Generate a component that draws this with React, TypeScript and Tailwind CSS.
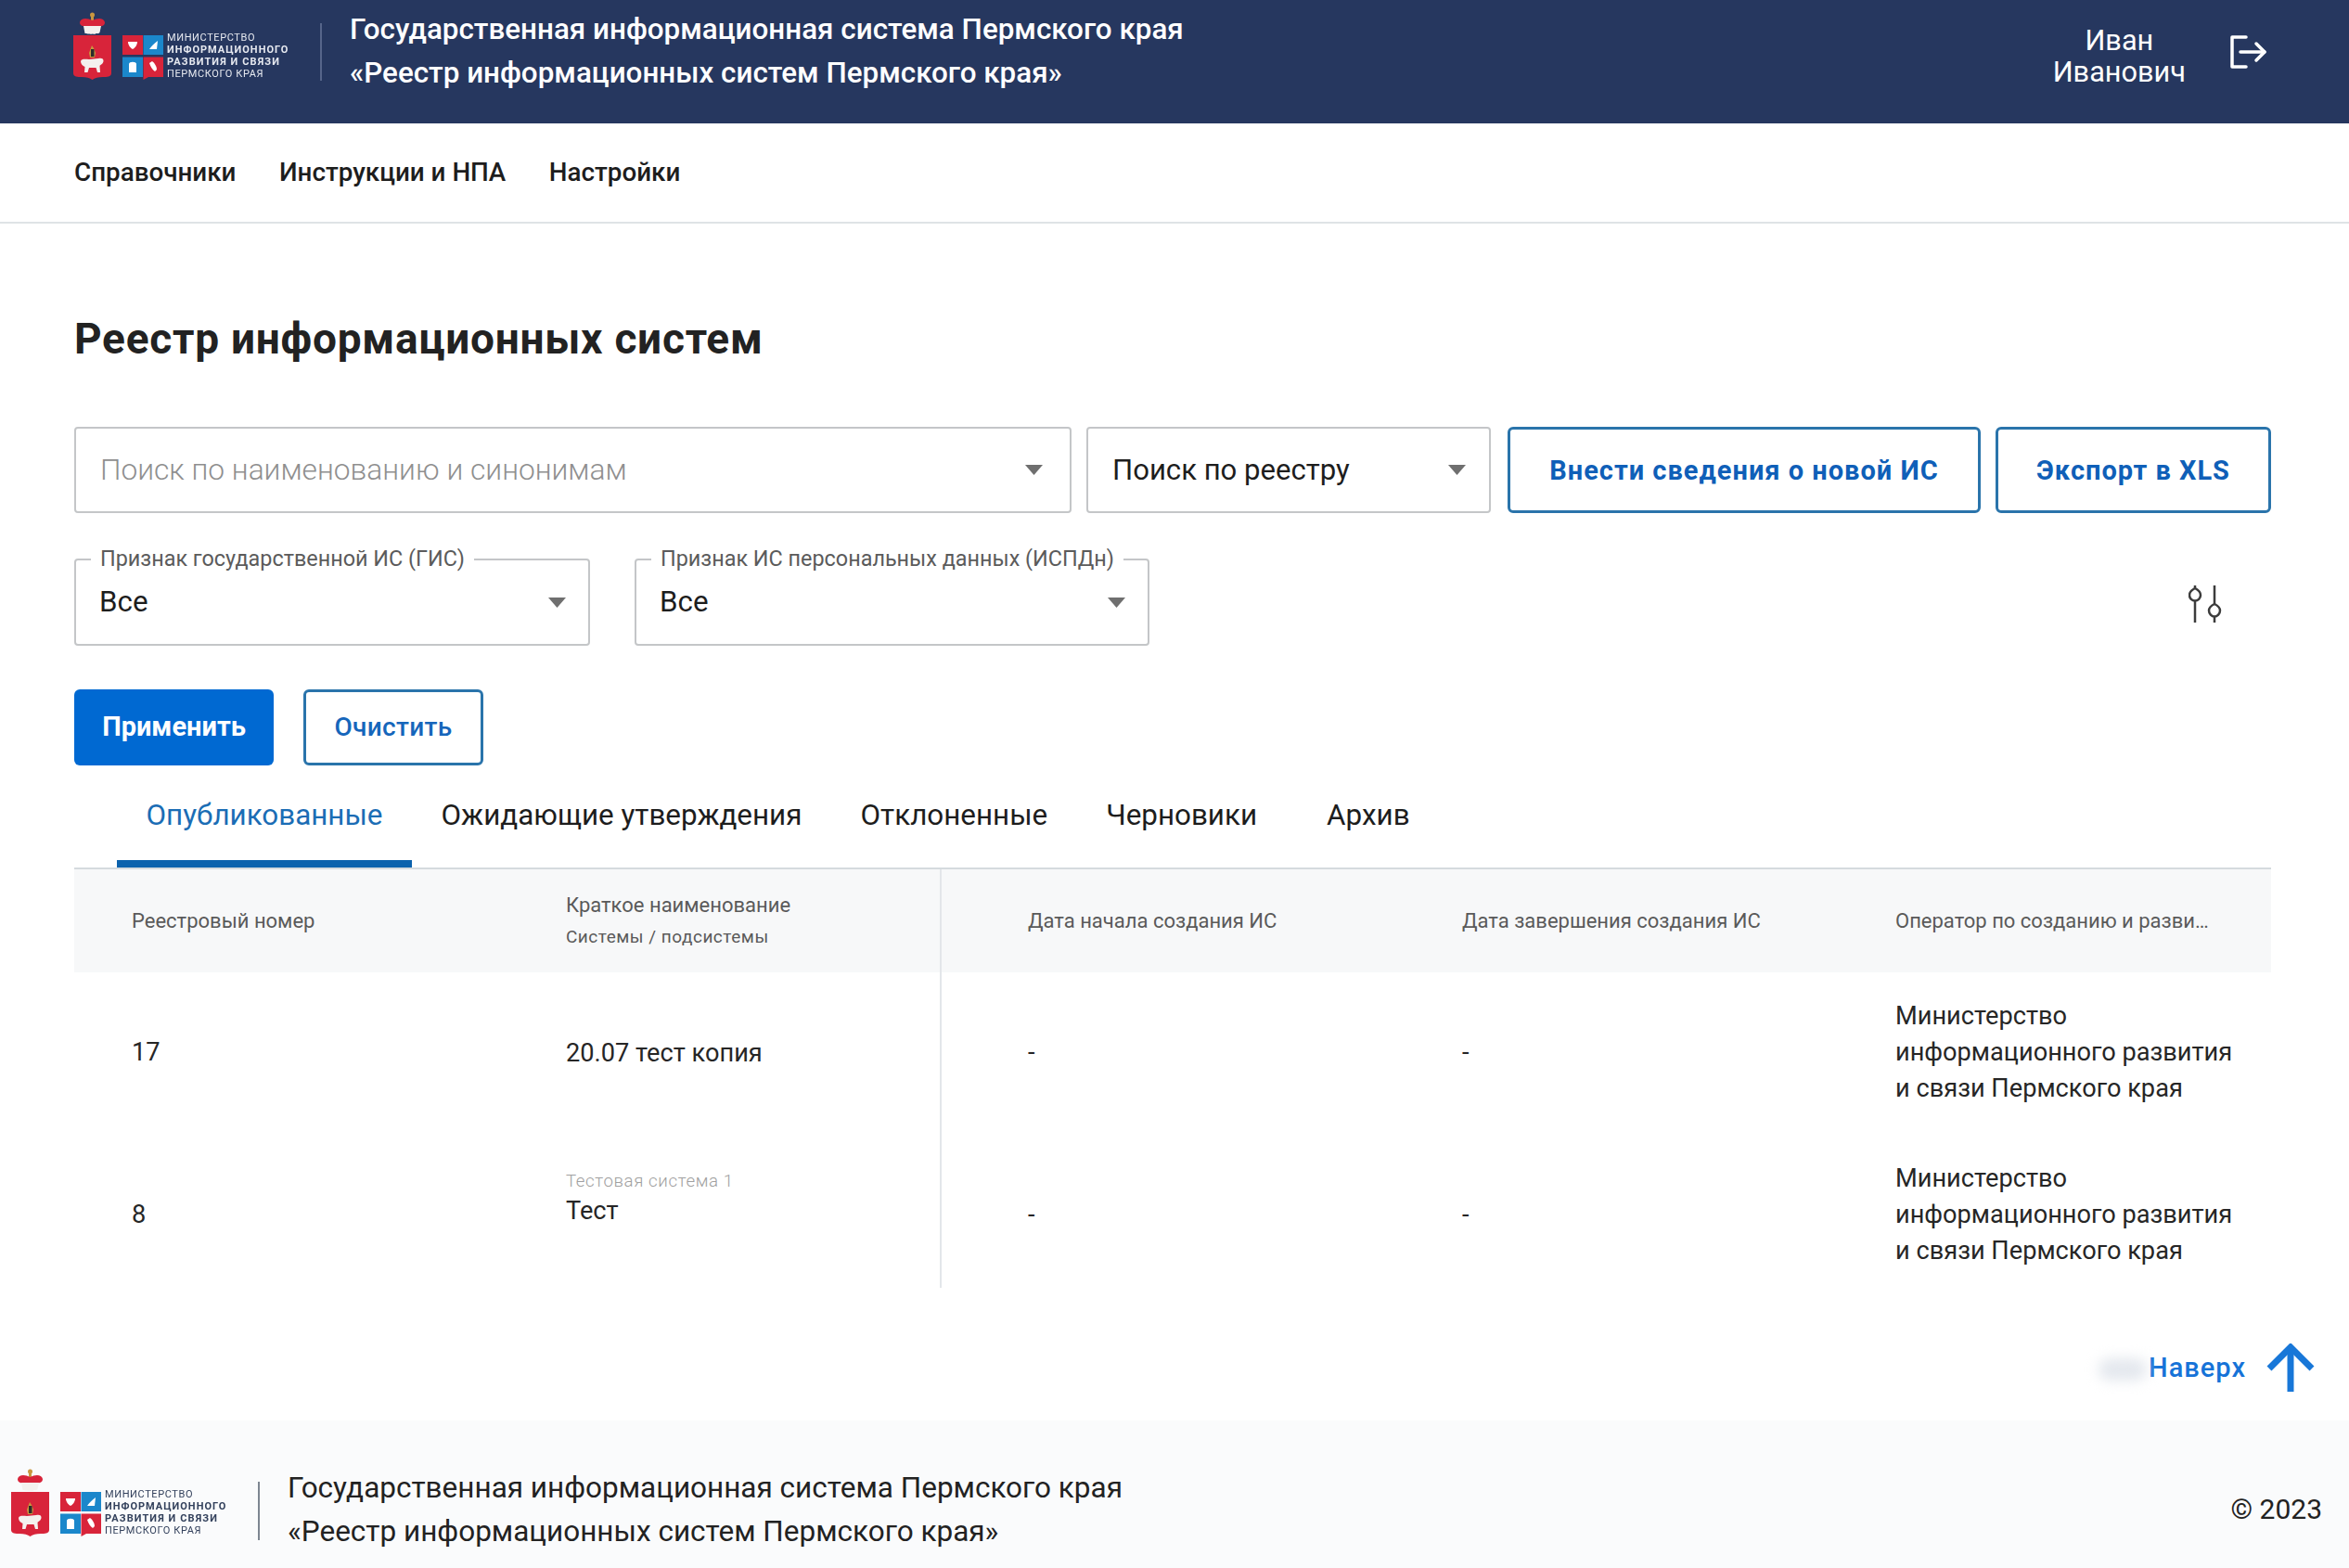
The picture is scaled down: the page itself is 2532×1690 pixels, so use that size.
const TITLE_1 = 'Государственная информационная система Пермского края';
const TITLE_2 = '«Реестр информационных систем Пермского края»';

function LogoMark() {
  return (
    <svg width="97" height="74" viewBox="0 0 97 74" className="shrink-0">
      {/* crown */}
      <circle cx="20.5" cy="3" r="2.5" fill="#c9973f" />
      <rect x="19" y="3" width="3" height="6" fill="#c9973f" />
      <path d="M7 11 C8 6 15 6 20.5 9 C26 6 33 6 34 11 C34 15 30 16 27 15 L14 15 C11 16 7 15 7 11 Z" fill="#d8243a" />
      <path d="M11 15 H30 L28.5 22 C27 24 25 22.5 24 23.5 C22.5 24.5 21.5 23 20.5 23.5 C19.5 24.5 18 23 17 23.5 C15.5 24 14 22.5 12.5 23 Z" fill="#f4f1ee" />
      {/* shield */}
      <path d="M0 25 H41 V66 C41 70 36 70 32 70 C27 70 23 71 20.5 73 C18 71 14 70 9 70 C5 70 0 70 0 66 Z" fill="#d8243a" />
      <path d="M20 36 L22 39 L24 44 L23 49 H18 L17 44 Z" fill="#c9973f" />
      <rect x="19" y="40" width="3.5" height="8" fill="#2c2c2a" />
      <path d="M8 53 C9 50 13 51 17 51 L27 50 C30 49 33 50 32.5 53 C32 56 29 57 28.5 58 L29 65 H26 L24.5 60 L17 60 L15.5 65 H12 L12.5 59 C10 58 8 56 8 53 Z" fill="#f4f1ee" />
      {/* ministry squares */}
      <rect x="53" y="25" width="22" height="21" fill="#d8243a" />
      <rect x="75.5" y="25" width="21.5" height="21" fill="#1b87cb" />
      <rect x="53" y="48.5" width="22" height="21.5" fill="#1b87cb" />
      <path d="M75.5 48.5 H97 V70 H81 L75.5 73 Z" fill="#d8243a" />
      <path d="M59 32 H69 C69 36 66 39 64 40 C62 39 59 36 59 32 Z" fill="#ffffff" />
      <path d="M91 31 L90 40 H82 C84 37 87 34 91 31 Z" fill="#ffffff" />
      <path d="M60 56 C60 53 68 53 68 56 V65 H60 Z" fill="#ffffff" />
      <path d="M82 55 L85 53 C88 55 90 59 90 62 L88 64 C85 62 83 58 82 55 Z" fill="#ffffff" />
    </svg>
  );
}

function Logo({ dark }: { dark?: boolean }) {
  return (
    <div className="flex h-[74px] w-[266px] shrink-0">
      <LogoMark />
      <div className={`ml-[4px] pt-[21px] text-[11px] leading-[13px] whitespace-nowrap blur-[0.5px] ${dark ? 'text-[#33415c]' : 'text-[#e6e9f0]'}`}>
        <div className="font-normal tracking-[0.6px]">МИНИСТЕРСТВО</div>
        <div className="font-bold tracking-[1px]">ИНФОРМАЦИОННОГО</div>
        <div className="font-bold tracking-[1.1px]">РАЗВИТИЯ И СВЯЗИ</div>
        <div className="font-normal tracking-[0.6px]">ПЕРМСКОГО КРАЯ</div>
      </div>
    </div>
  );
}

function Caret() {
  return (
    <svg width="19" height="11" viewBox="0 0 19 11" className="shrink-0">
      <polygon points="0,0 19,0 9.5,11" fill="#6f6f6f" />
    </svg>
  );
}

function SelectBox({ text, muted, className }: { text: string; muted?: boolean; className: string }) {
  return (
    <div className={`flex h-[93px] items-center justify-between rounded-[4px] border-2 border-[#c4c6c8] pl-[26px] ${className}`}>
      <span className={muted ? 'pt-[1px] text-[31.7px] font-light text-[#8f8f8f]' : 'pt-[1px] text-[31.1px] text-[#1d1d1d]'}>{text}</span>
      <Caret />
    </div>
  );
}

function FilterBox({ label, className }: { label: string; className: string }) {
  return (
    <div className={`relative flex h-[94px] items-center justify-between rounded-[4px] border-2 border-[#c4c6c8] pl-[25px] pr-[24px] ${className}`}>
      <span className="absolute left-[16px] top-[-17px] bg-white px-[10px] text-[23.4px] leading-[30px] text-[#5b5b5b]">{label}</span>
      <span className="text-[31.3px] text-[#1d1d1d]">Все</span>
      <Caret />
    </div>
  );
}

function Tab({ children, active, className = '' }: { children: string; active?: boolean; className?: string }) {
  return (
    <div className={`flex h-[92px] items-center border-b-8 px-[31.5px] pb-[12px] text-[31.4px] ${active ? 'border-[#0b62ad] text-[#1b6db5]' : 'border-transparent text-[#1d1d1d]'} ${className}`}>
      {children}
    </div>
  );
}

const OPERATOR = ['Министерство', 'информационного развития', 'и связи Пермского края'];

function Row({ num, name, sub, className, cell = '' }: { num: string; name: string; sub?: string; className: string; cell?: string }) {
  return (
    <div className={`grid grid-cols-[530px_403px_468px_467px_1fr] text-[27.2px] text-[#262626] ${className}`}>
      <div className={`flex items-center pl-[62px] ${cell}`}>{num}</div>
      <div className={`flex items-center ${cell}`}>
        <div className={sub ? 'mt-[-32px]' : 'mt-[2px]'}>
          {sub && <div className="text-[18.7px] leading-[24px] font-light tracking-[0.6px] text-[#a0a0a0]">{sub}</div>}
          <div>{name}</div>
        </div>
      </div>
      <div className={`flex items-center border-l-2 border-[#e3e6ea] pl-[93px] ${cell}`}>-</div>
      <div className={`flex items-center pl-[95px] ${cell}`}>-</div>
      <div className={`flex flex-col justify-center pl-[95px] leading-[39px] ${cell}`}>
        {OPERATOR.map((line) => (
          <div key={line} className="whitespace-nowrap">{line}</div>
        ))}
      </div>
    </div>
  );
}

export default function App() {
  return (
    <div className="w-[2532px] h-[1690px] overflow-hidden bg-white font-['Roboto',sans-serif]">
      <header className="flex h-[133px] items-start bg-[#26375f] pl-[79px] pr-[88px] pt-[13px] text-white">
        <Logo />
        <div className="h-[62px] w-[2px] mt-[12px] bg-[#56658a]" />
        <div className="ml-[30px] mt-[-5px] text-[31.4px] leading-[47px] font-medium">
          <div>{TITLE_1}</div>
          <div>{TITLE_2}</div>
        </div>
        <div className="ml-auto mt-[14px] flex items-start">
          <div className="text-center text-[30.7px] leading-[34px]">
            <div>Иван</div>
            <div>Иванович</div>
          </div>
          <svg width="40" height="36" viewBox="0 0 40 36" fill="none" stroke="#ffffff" strokeWidth="3.5" strokeLinecap="round" strokeLinejoin="round" className="ml-[48px] mt-[11px]">
            <path d="M17 2 H2 V34 H17" />
            <path d="M11 18 H37" />
            <path d="M28 9 L37 18 L28 27" />
          </svg>
        </div>
      </header>

      <nav className="flex h-[108px] items-center gap-[46.5px] border-b-2 border-[#dfe3e6] pl-[80px] text-[27.8px] font-medium text-[#1d1d1d]">
        <span>Справочники</span>
        <span>Инструкции и НПА</span>
        <span>Настройки</span>
      </nav>

      <main className="pl-[80px] pr-[84px]">
        <h1 className="mt-[96px] text-[46px] leading-[56px] font-bold tracking-[0.75px] text-[#222222]">Реестр информационных систем</h1>

        <div className="mt-[67px] flex">
          <SelectBox text="Поиск по наименованию и синонимам" muted className="w-[1075px] pr-[29px]" />
          <SelectBox text="Поиск по реестру" className="ml-[16px] w-[436px] pr-[25px]" />
          <button className="ml-[18px] h-[93px] w-[510px] rounded-[6px] border-[3px] border-[#2a74ab] pt-[2px] text-[29px] font-bold tracking-[1px] text-[#0f5fb8]">Внести сведения о новой ИС</button>
          <button className="ml-[16px] h-[93px] w-[297px] rounded-[6px] border-[3px] border-[#2a74ab] pt-[2px] text-[29px] font-bold tracking-[1px] text-[#0f5fb8]">Экспорт в XLS</button>
        </div>

        <div className="mt-[49px] flex items-center">
          <FilterBox label="Признак государственной ИС (ГИС)" className="w-[556px]" />
          <FilterBox label="Признак ИС персональных данных (ИСПДн)" className="ml-[48px] w-[555px]" />
          <svg width="36" height="40" viewBox="0 0 36 40" fill="none" stroke="#3c3c3c" strokeWidth="2.5" className="ml-auto mr-[53px] mt-[3px]">
            <path d="M7 0 V4 M7 17 V40" />
            <path d="M7 3 C11 5 13 8 13 10.5 C13 14 10 16.5 7 16.5 C4 16.5 1 14 1 10.5 C1 8 3 5 7 3 Z" />
            <path d="M28 0 V20 M28 34 V40" />
            <path d="M28 20 C32 22 34 24.5 34 27 C34 30.5 31 33.5 28 33.5 C25 33.5 22 30.5 22 27 C22 24.5 24 22 28 20 Z" />
          </svg>
        </div>

        <div className="mt-[47px] flex gap-[32px]">
          <button className="h-[82px] w-[215px] rounded-[6px] bg-[#0069d2] text-[29px] font-bold text-white">Применить</button>
          <button className="h-[82px] w-[194px] rounded-[6px] border-[3px] border-[#2a74ab] text-[28px] font-medium tracking-[0.3px] text-[#1666bb]">Очистить</button>
        </div>

        <div className="mt-[18px] flex border-b-2 border-[#d5dade] pl-[46px]">
          <Tab active>Опубликованные</Tab>
          <Tab>Ожидающие утверждения</Tab>
          <Tab>Отклоненные</Tab>
          <Tab>Черновики</Tab>
          <Tab className="ml-[12px]">Архив</Tab>
        </div>

        <div className="grid h-[111px] grid-cols-[530px_403px_468px_467px_1fr] items-center bg-[#f7f8f9] text-[22px] text-[#5a5a5a]">
          <div className="pl-[62px]">Реестровый номер</div>
          <div className="leading-[34px]">
            <div>Краткое наименование</div>
            <div className="text-[19px] tracking-[0.5px]">Системы / подсистемы</div>
          </div>
          <div className="flex h-full items-center border-l-2 border-[#e3e6ea] pl-[93px]">Дата начала создания ИС</div>
          <div className="pl-[95px]">Дата завершения создания ИС</div>
          <div className="truncate pl-[95px]">Оператор по созданию и разви…</div>
        </div>
        <Row num="17" name="20.07 тест копия" className="h-[172px]" />
        <Row num="8" name="Тест" sub="Тестовая система 1" className="h-[168px]" cell="pt-[10px]" />
      </main>

      <div className="relative flex h-[143px] justify-end pr-[37px] pt-[60px]">
        <div className="absolute left-[2262px] top-[76px] h-[24px] w-[52px] rounded-full bg-[#e4e8ee] blur-[7px]" />
        <a className="mt-[3px] text-[29px] leading-[46px] font-medium tracking-[1px] text-[#1673d8]">Наверх</a>
        <svg width="52" height="52" viewBox="0 0 52 52" fill="none" stroke="#1877d8" strokeWidth="7" className="ml-[22px]">
          <path d="M26 4 V52" />
          <path d="M3 27 L26 4 L49 27" />
        </svg>
      </div>

      <footer className="flex h-[159px] items-start bg-[#fafbfc] pl-[12px] pr-[29px] pt-[52px] text-[#222222]">
        <Logo dark />
        <div className="h-[63px] w-[2px] mt-[14px] bg-[#7d8691]" />
        <div className="ml-[30px] mt-[-3px] text-[31.5px] leading-[47px]">
          <div>{TITLE_1}</div>
          <div>{TITLE_2}</div>
        </div>
        <div className="ml-auto mt-[26px] text-[30px] leading-[36px]">© 2023</div>
      </footer>
    </div>
  );
}
